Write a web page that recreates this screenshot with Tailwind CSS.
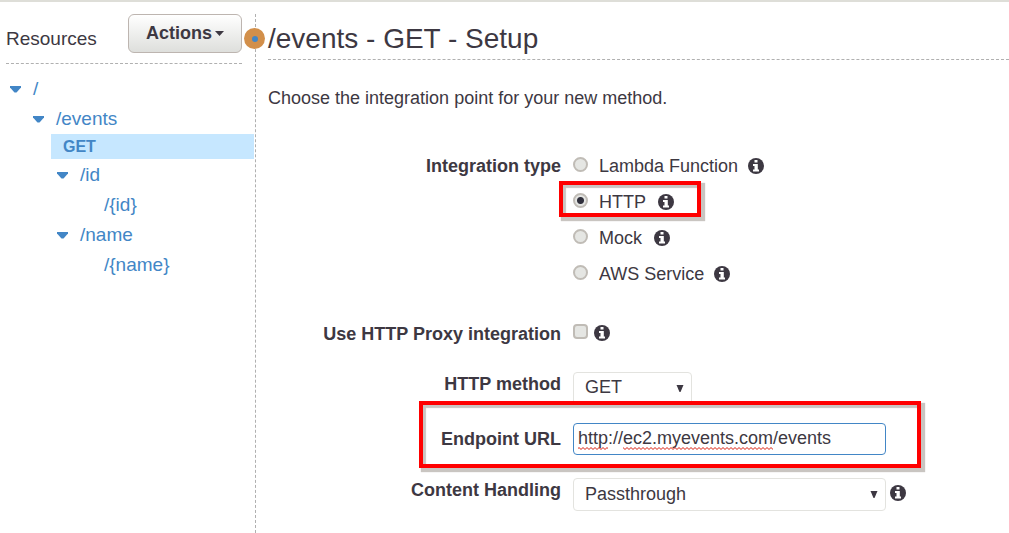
<!DOCTYPE html>
<html lang="en">
<head>
<meta charset="utf-8">
<meta name="viewport" content="width=device-width, initial-scale=1">
<title>/events - GET - Setup</title>
<script src="https://cdn.jsdelivr.net/npm/@tailwindcss/browser@4"></script>
</head>
<body class="min-h-screen flex flex-col bg-white font-['Liberation_Sans',Arial,sans-serif] text-lg text-[#3d3842]">
<svg class="hidden">
  <symbol id="info" viewBox="0 0 16 16">
    <circle cx="8" cy="8" r="8" fill="#3d3842"/>
    <path fill="#fff" d="M6.500 2h3v2.500h-3zM5 6h4.800v5.500H11v2H5v-2h1.500V8H5z"/>
  </symbol>
  <symbol id="caret" viewBox="0 0 11 7"><path fill="#4286c6" d="M0 0h11v1.500L6.500 6.500h-2L0 1.500z"/></symbol>
  <symbol id="arrow" viewBox="0 0 8 8"><path fill="#3d3842" d="M.5 1h7L4.500 8h-1z"/></symbol>
</svg>
<div class="h-0.5 shrink-0 bg-[#deded8]"></div>
<div class="grow flex pt-3">
  <aside class="relative w-64 shrink-0 border-r border-dashed border-[#b0b0b0]">
    <header class="ml-1.5 mr-[13px] flex h-[50px] justify-between border-b border-dashed border-[#b0b0b0]">
      <h2 class="pt-[11px] text-[19px] leading-7">Resources</h2>
      <button type="button" class="flex h-[39px] w-[114px] items-center justify-center gap-[3px] rounded-md border border-[#bdb5b0] bg-linear-to-b from-white to-[#dedfdc] pb-0.5 font-bold">Actions
        <svg class="mt-0.5 h-[5px] w-[9px]" viewBox="0 0 9 5"><path fill="#3d3842" d="M0 0h9L4.500 5z"/></svg>
      </button>
    </header>
    <span class="absolute -right-2.5 top-3.5 flex size-[21px] items-center justify-center rounded-full bg-[#d28f4a]"><span class="size-1.5 rounded-full bg-[#4286c6]"></span></span>
    <nav class="mt-2.5 flex flex-col text-[19px] leading-[30px] text-[#4286c6]" aria-label="Resources">
      <div class="flex items-center gap-3 pl-2.5"><svg class="h-[7px] w-[11px]"><use href="#caret"/></svg><a href="#root">/</a></div>
      <div class="flex items-center gap-3 pl-[33px]"><svg class="h-[7px] w-[11px]"><use href="#caret"/></svg><a href="#events">/events</a></div>
      <a href="#get" class="ml-[51px] mr-px mb-px bg-[#c6e7ff] pl-3 text-base leading-[25px] font-bold">GET</a>
      <div class="flex items-center gap-3 pl-[57px]"><svg class="h-[7px] w-[11px]"><use href="#caret"/></svg><a href="#id">/id</a></div>
      <a href="#id-param" class="pl-[104px]">/{id}</a>
      <div class="flex items-center gap-3 pl-[57px]"><svg class="h-[7px] w-[11px]"><use href="#caret"/></svg><a href="#name">/name</a></div>
      <a href="#name-param" class="pl-[104px]">/{name}</a>
    </nav>
  </aside>
  <main class="min-w-0 grow pl-3">
    <h1 class="h-[46px] border-b border-dashed border-[#b0b0b0] pt-[7px] text-[28px] leading-9">/events - GET - Setup</h1>
    <p class="mt-6 leading-7">Choose the integration point for your new method.</p>
    <form class="mt-9">
      <div role="radiogroup" aria-labelledby="type" class="grid grid-cols-[293px_1fr] gap-x-3">
        <span id="type" class="text-right font-bold leading-9">Integration type</span>
        <div class="flex flex-col items-start leading-9">
          <div class="flex items-center"><input id="lambda" name="type" type="radio" class="mb-1 mr-[11px] size-[15px] appearance-none rounded-full border-2 border-[#c0bcb6] bg-[#e5e6e3]"><label for="lambda" class="mr-2.5">Lambda Function</label><svg class="size-4" role="img" aria-label="Info"><use href="#info"/></svg></div>
          <div class="relative flex items-center"><input id="http" name="type" type="radio" checked class="mb-1 mr-[11px] size-[15px] appearance-none rounded-full border-2 border-[#c0bcb6] bg-[#e5e6e3] checked:bg-radial checked:from-[#30303c] checked:from-[3px] checked:to-[#e5e6e3] checked:to-[4px]"><label for="http" class="mr-3">HTTP</label><svg class="size-4" role="img" aria-label="Info"><use href="#info"/></svg>
            <div class="pointer-events-none absolute -left-3.5 -top-[3px] h-9 w-[142px] border-4 border-[#ff0000] shadow-[3px_3px_1px_1px_#c9c5c1,inset_3px_3px_1px_#c9c5c1]"></div>
          </div>
          <div class="flex items-center"><input id="mock" name="type" type="radio" class="mb-1 mr-[11px] size-[15px] appearance-none rounded-full border-2 border-[#c0bcb6] bg-[#e5e6e3]"><label for="mock" class="mr-3">Mock</label><svg class="size-4" role="img" aria-label="Info"><use href="#info"/></svg></div>
          <div class="flex items-center"><input id="aws" name="type" type="radio" class="mb-1 mr-[11px] size-[15px] appearance-none rounded-full border-2 border-[#c0bcb6] bg-[#e5e6e3]"><label for="aws" class="mr-2.5">AWS Service</label><svg class="size-4" role="img" aria-label="Info"><use href="#info"/></svg></div>
        </div>
      </div>
      <div class="mt-6 grid grid-cols-[293px_1fr] gap-x-3 leading-8">
        <label for="proxy" class="pt-0.5 text-right font-bold">Use HTTP Proxy integration</label>
        <div class="flex items-center gap-1.5"><input id="proxy" type="checkbox" class="mb-1 size-[15px] appearance-none rounded-sm border-2 border-[#c0bcb6] bg-[#e5e6e3]"><svg class="size-4" role="img" aria-label="Info"><use href="#info"/></svg></div>
      </div>
      <div class="mt-[22px] grid grid-cols-[293px_1fr] gap-x-3">
        <label for="method" class="text-right font-bold leading-6">HTTP method</label>
        <div class="relative w-[119px]"><select id="method" class="block h-[33px] w-full appearance-none rounded-sm border border-[#e3e3df] bg-white pb-1 pl-[11px]"><option>GET</option></select><svg class="pointer-events-none absolute right-2 top-3 size-2"><use href="#arrow"/></svg></div>
      </div>
      <div class="relative mt-[18px] grid grid-cols-[293px_1fr] gap-x-3">
        <div class="pointer-events-none absolute -top-[22px] left-[151px] h-[67px] w-[502px] border-4 border-[#ff0000] shadow-[3px_3px_1px_1px_#c9c5c1,inset_3px_3px_1px_#c9c5c1]"></div>
        <label for="url" class="text-right font-bold leading-8">Endpoint URL</label>
        <div class="relative w-[313px]"><input id="url" type="text" spellcheck="false" value="http://ec2.myevents.com/events" class="block h-8 w-full rounded-sm border border-[#4286c6] pb-0.5 pl-1 outline-none">
          <svg class="pointer-events-none absolute left-[5px] top-6 h-[3px] w-[196px]">
            <defs><pattern id="wave" width="4" height="3" patternUnits="userSpaceOnUse"><path d="M-1 2.500L1 .5 3 2.500 5 .5" fill="none" stroke="#d81808"/></pattern></defs>
            <rect width="30" height="3" fill="url(#wave)"/><rect x="45" width="150" height="3" fill="url(#wave)"/>
          </svg>
        </div>
      </div>
      <div class="mt-[23px] grid grid-cols-[293px_1fr] gap-x-3">
        <label for="content" class="text-right font-bold leading-6">Content Handling</label>
        <div class="flex items-center gap-1"><div class="relative w-[313px]"><select id="content" class="block h-[33px] w-full appearance-none rounded-sm border border-[#e3e3df] bg-white pb-0.5 pl-[11px]"><option>Passthrough</option></select><svg class="pointer-events-none absolute right-2 top-3 size-2"><use href="#arrow"/></svg></div><svg class="mb-1 size-4" role="img" aria-label="Info"><use href="#info"/></svg></div>
      </div>
    </form>
  </main>
</div>
</body>
</html>
